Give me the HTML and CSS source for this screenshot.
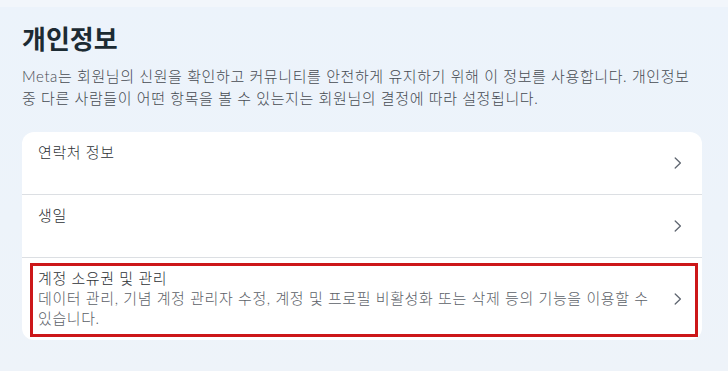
FILE: index.html
```html
<!DOCTYPE html>
<html lang="ko">
<head>
<meta charset="utf-8">
<title>개인정보</title>
<link rel="stylesheet" href="styles.css">
</head>
<body>
<div class="topband"></div>
<main class="page">
  <h1 class="title">개인정보</h1>
  <p class="desc">Meta는 회원님의 신원을 확인하고 커뮤니티를 안전하게 유지하기 위해 이 정보를 사용합니다. 개인정보 중 다른 사람들이 어떤 항목을 볼 수 있는지는 회원님의 결정에 따라 설정됩니다.</p>
  <section class="card">
    <div class="row">
      <div class="row-text">
        <div class="row-title">연락처 정보</div>
      </div>
      <svg class="chev" width="8" height="12" viewBox="0 0 8 12"><path d="M1.2 1 L6.4 6 L1.2 11" fill="none" stroke="#5f6670" stroke-width="1.3" stroke-linecap="round" stroke-linejoin="round"/></svg>
    </div>
    <div class="row">
      <div class="row-text">
        <div class="row-title">생일</div>
      </div>
      <svg class="chev" width="8" height="12" viewBox="0 0 8 12"><path d="M1.2 1 L6.4 6 L1.2 11" fill="none" stroke="#5f6670" stroke-width="1.3" stroke-linecap="round" stroke-linejoin="round"/></svg>
    </div>
    <div class="row row-last">
      <div class="row-text">
        <div class="row-title">계정 소유권 및 관리</div>
        <div class="row-sub">데이터 관리, 기념 계정 관리자 수정, 계정 및 프로필 비활성화 또는 삭제 등의 기능을 이용할 수 있습니다.</div>
      </div>
      <svg class="chev" width="8" height="12" viewBox="0 0 8 12"><path d="M1.2 1 L6.4 6 L1.2 11" fill="none" stroke="#5f6670" stroke-width="1.3" stroke-linecap="round" stroke-linejoin="round"/></svg>
      <div class="highlight"></div>
    </div>
  </section>
</main>
</body>
</html>
```
FILE: styles.css
```css
* { box-sizing: border-box; }
html, body { margin: 0; padding: 0; }
body {
  width: 728px;
  height: 371px;
  overflow: hidden;
  background: linear-gradient(180deg, #ecf3fb 0%, #edf3fa 60%, #eef3f9 100%);
  font-family: Lato, "Noto Sans CJK KR", sans-serif;
  color: #1c2b33;
  word-break: keep-all;
}
.topband {
  height: 7px;
  background: #f2f6fb;
}
.page {
  padding: 16px 26px 0 22px;
}
.title {
  margin: 0;
  font-size: 26px;
  line-height: 32px;
  font-weight: 700;
  color: #1c2b33;
}
.desc {
  margin: 10px 0 0;
  font-size: 15px;
  line-height: 22px;
  letter-spacing: 0.6px;
  font-weight: 300;
  color: #464b52;
}
.card {
  margin-top: 23px;
  width: 680px;
  background: #ffffff;
  border-radius: 12px;
}
.row {
  position: relative;
  display: flex;
  align-items: center;
  min-height: 63px;
  padding: 10px 20px 10px 16px;
  border-bottom: 1px solid #dcdfe3;
}
.row-last { border-bottom: none; min-height: 82px; }
.row-text {
  flex: 1;
  align-self: flex-start;
  padding-right: 20px;
}
.row-title {
  font-size: 15px;
  line-height: 20px;
  letter-spacing: 0.6px;
  font-weight: 300;
  color: #2e3236;
}
.row-sub {
  font-size: 15px;
  line-height: 20px;
  letter-spacing: 0.6px;
  font-weight: 300;
  color: #5c6168;
}
.chev { flex: none; }
.highlight {
  position: absolute;
  left: 8px;
  top: 5px;
  right: 4px;
  bottom: 3px;
  border: 3px solid #cc1719;
  pointer-events: none;
}
```
